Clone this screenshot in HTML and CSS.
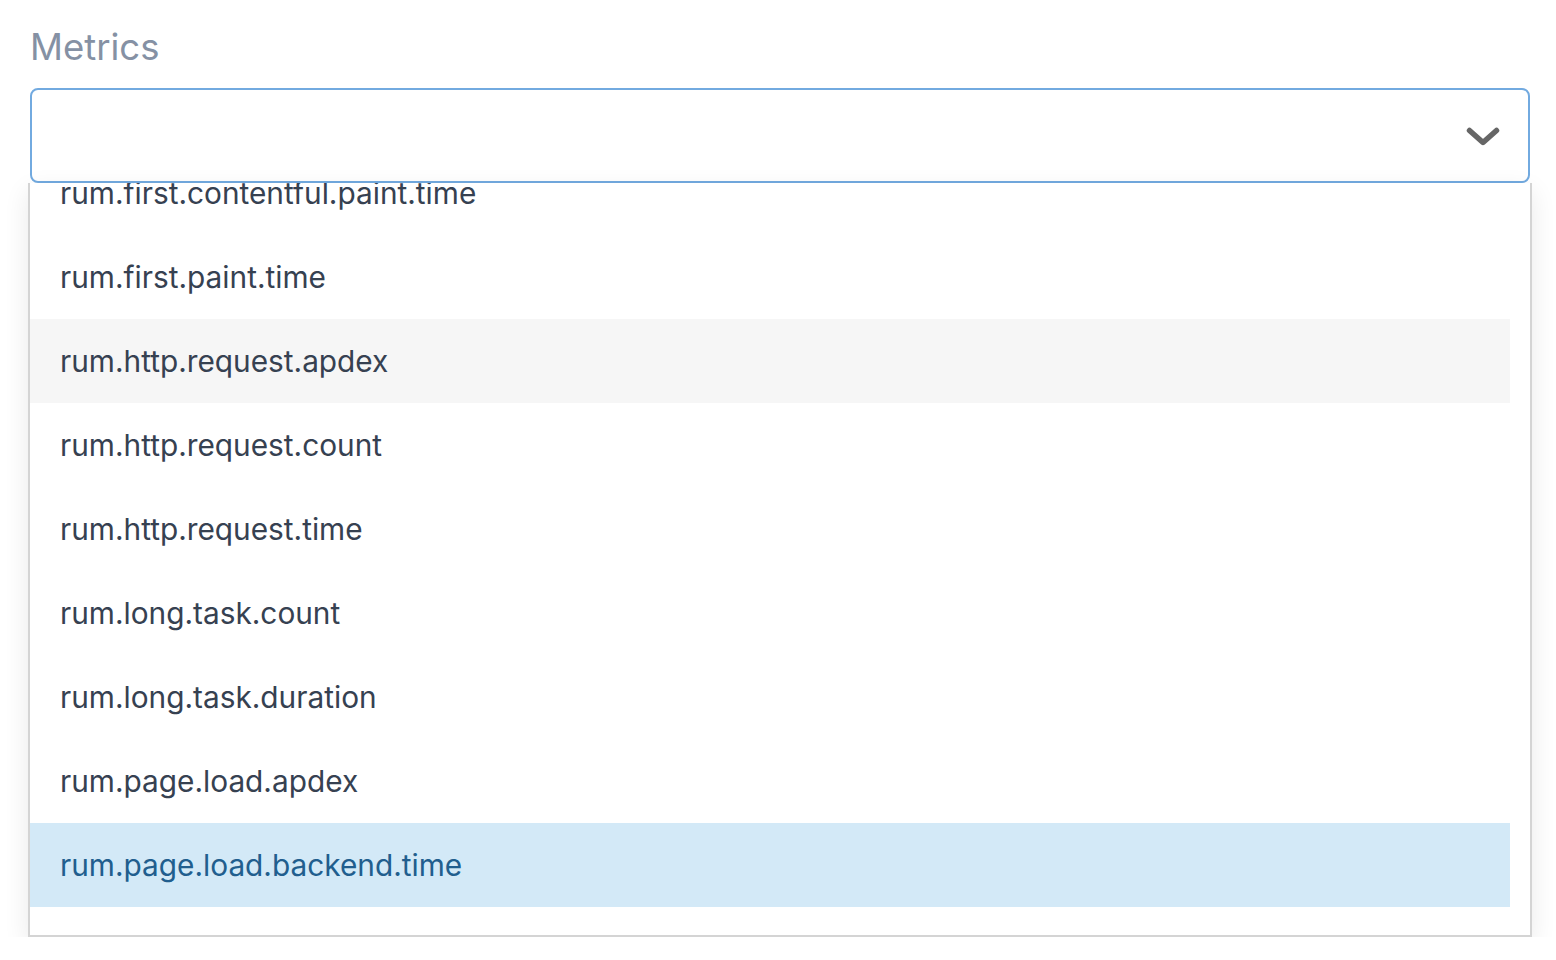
FILE: index.html
```html
<!DOCTYPE html>
<html>
<head>
<meta charset="utf-8">
<link rel="stylesheet" href="styles.css">
</head>
<body>
<div class="field">
  <label class="label">Metrics</label>
  <div class="select">
    <svg class="chevron" width="34" height="20" viewBox="0 0 34 20"><path d="M3.5 3.5 L17 15.5 L30.5 3.5" fill="none" stroke="#666666" stroke-width="5.5" stroke-linecap="round" stroke-linejoin="round"/></svg>
  </div>
  <div class="menu">
    <div class="menu-inner">
      <div class="option first">rum.first.contentful.paint.time</div>
      <div class="option">rum.first.paint.time</div>
      <div class="option hover">rum.http.request.apdex</div>
      <div class="option">rum.http.request.count</div>
      <div class="option">rum.http.request.time</div>
      <div class="option">rum.long.task.count</div>
      <div class="option">rum.long.task.duration</div>
      <div class="option">rum.page.load.apdex</div>
      <div class="option selected">rum.page.load.backend.time</div>
    </div>
  </div>
</div>
</body>
</html>
```
FILE: styles.css
```css
html, body {
  margin: 0;
  padding: 0;
  background: #ffffff;
  font-family: Inter, "Noto Sans", sans-serif;
}
.field {
  display: flex;
  flex-direction: column;
  padding-top: 24px;
}
.label {
  margin-left: 30px;
  font-size: 36.5px;
  line-height: 46px;
  height: 46px;
  color: #8591a4;
  margin-bottom: 18px;
}
.select {
  margin-left: 30px;
  width: 1500px;
  height: 95px;
  box-sizing: border-box;
  border: 2px solid #72aae0;
  border-radius: 8px;
  display: flex;
  align-items: center;
  justify-content: flex-end;
  padding-right: 28px;
}
.chevron {
  display: block;
  margin-top: 2px;
}
.menu {
  margin-left: 28px;
  width: 1504px;
  height: 754px;
  box-sizing: border-box;
  border: 2px solid #d4d4d4;
  border-top: none;
  box-shadow: 0 8px 24px rgba(0, 0, 0, 0.09);
  overflow: hidden;
  background: #fff;
}
.menu-inner {
  display: flex;
  flex-direction: column;
  padding-right: 20px;
}
.option {
  height: 84px;
  flex: none;
  display: flex;
  align-items: center;
  padding-left: 30px;
  padding-bottom: 1px;
  box-sizing: border-box;
  font-size: 29.8px;
  color: #364151;
}
.option.first {
  margin-top: -32px;
}
.option.hover {
  background: #f6f6f6;
}
.option.selected {
  background: #d3e9f7;
  color: #215e8e;
}
```
